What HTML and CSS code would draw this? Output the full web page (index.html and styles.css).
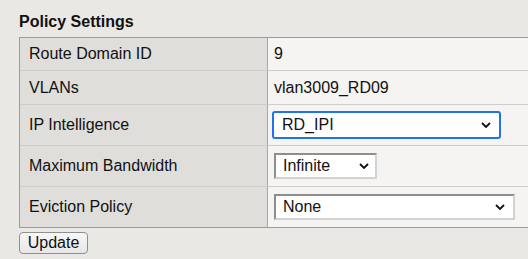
FILE: index.html
```html
<!DOCTYPE html>
<html>
<head>
<meta charset="utf-8">
<link rel="stylesheet" href="styles.css">
</head>
<body>
<div class="page">
  <h2 class="title">Policy Settings</h2>
  <div class="settings">
    <div class="label r1">Route Domain ID</div>
    <div class="value r1">9</div>
    <div class="label r2">VLANs</div>
    <div class="value r2">vlan3009_RD09</div>
    <div class="label r3">IP Intelligence</div>
    <div class="value r3">
      <div class="select focus w-ip"><span>RD_IPI</span><svg class="chev" width="10" height="6" viewBox="0 0 10 6"><path d="M1 1 L5 5 L9 1" fill="none" stroke="#111" stroke-width="1.8"/></svg></div>
    </div>
    <div class="label r3">Maximum Bandwidth</div>
    <div class="value r3">
      <div class="select w-bw"><span>Infinite</span><svg class="chev" width="10" height="6" viewBox="0 0 10 6"><path d="M1 1 L5 5 L9 1" fill="none" stroke="#111" stroke-width="1.8"/></svg></div>
    </div>
    <div class="label r3 last">Eviction Policy</div>
    <div class="value r3 last">
      <div class="select w-ev"><span>None</span><svg class="chev" width="10" height="6" viewBox="0 0 10 6"><path d="M1 1 L5 5 L9 1" fill="none" stroke="#111" stroke-width="1.8"/></svg></div>
    </div>
  </div>
  <button class="btn">Update</button>
</div>
</body>
</html>
```
FILE: styles.css
```css
html, body {
  margin: 0;
  padding: 0;
  background: #e9e8e4;
  overflow: hidden;
}
body {
  font-family: "Liberation Sans", Arial, sans-serif;
  font-size: 16px;
  color: #111;
}
.page {
  padding: 13px 0 0 19px;
  width: 509px;
}
.title {
  margin: 0 0 6px 0;
  font-size: 16px;
  font-weight: bold;
  line-height: 18px;
  height: 18px;
}
.settings {
  display: grid;
  grid-template-columns: 248px 1fr;
  border: 1px solid #9c9c9c;
  border-right: none;
  background: #f5f4f2;
}
.label, .value {
  display: flex;
  align-items: center;
  border-bottom: 1px solid #cdcdcb;
}
.label {
  background: #dfdedb;
  padding-left: 9px;
  border-right: 1px solid #a9a9a9;
}
.value {
  background: #f5f4f2;
  padding-left: 6px;
}
.r1 { height: 32px; }
.r2 { height: 33px; }
.r3 { height: 40px; }
.last { border-bottom: none; }
.select {
  box-sizing: border-box;
  height: 26px;
  display: flex;
  align-items: center;
  justify-content: space-between;
  background: #fff;
  border-style: solid;
  border-width: 2px;
  border-color: #8e8e8e #d2d2d2 #d2d2d2 #8e8e8e;
  padding: 0 6px 0 7px;
}
.select.focus {
  height: 28px;
  margin-left: -2px;
  border: 2px solid #1f75e8;
  border-radius: 3px;
  padding: 0 8px 0 8px;
}
.w-ip { width: 229px; }
.w-bw { width: 103px; }
.w-ev { width: 241px; padding-right: 8px; }
.chev { display: block; }
.btn {
  margin-top: 4px;
  width: 69px;
  height: 22px;
  padding: 0;
  font-family: "Liberation Sans", Arial, sans-serif;
  font-size: 16px;
  color: #111;
  border: 1px solid #8f8f8f;
  border-radius: 4px;
  background: linear-gradient(#f7f7f7, #e6e6e6);
  display: block;
}
```
